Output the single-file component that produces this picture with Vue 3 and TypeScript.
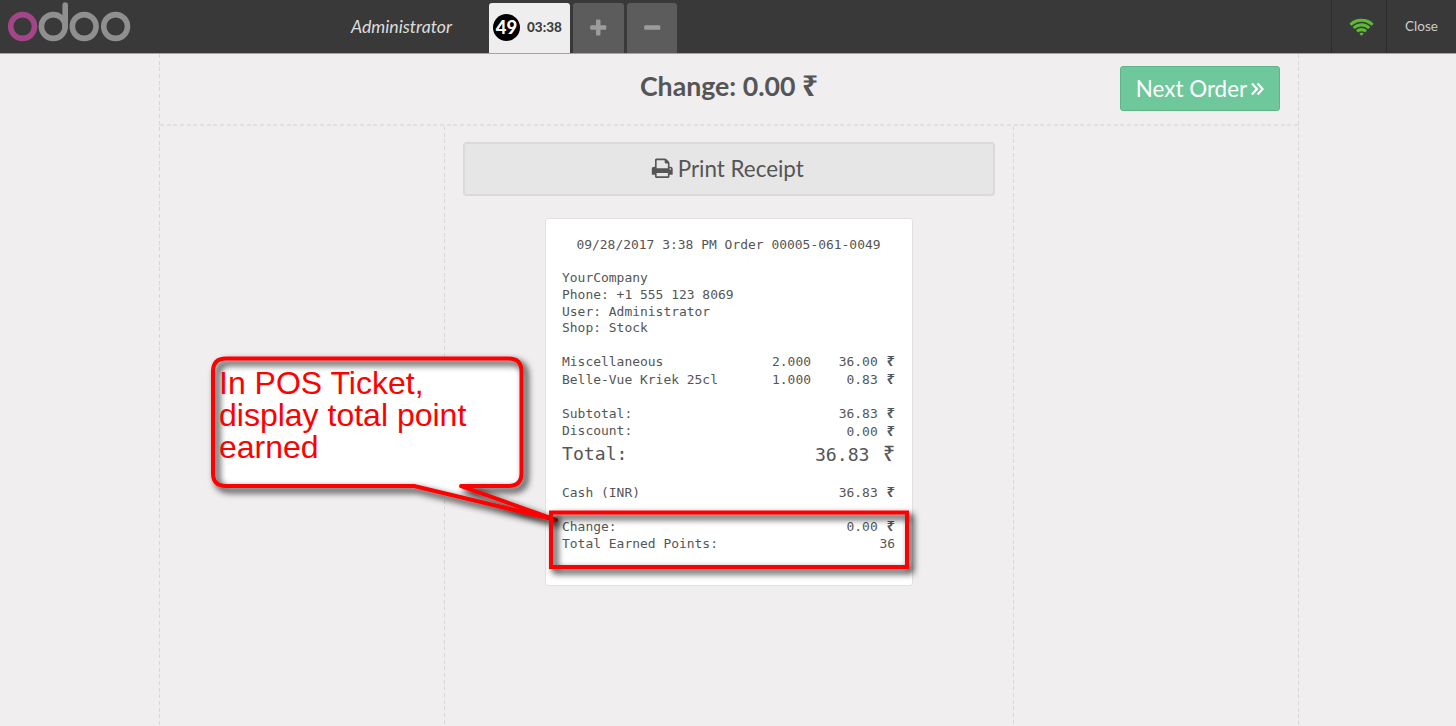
<script setup lang="ts">
interface Line {
  label: string
  qty?: string
  amount: string
  currency?: boolean
  kind?: string
}

const company: string[] = [
  'YourCompany',
  'Phone: +1 555 123 8069',
  'User: Administrator',
  'Shop: Stock',
]

const groups: { name: string; lines: Line[] }[] = [
  {
    name: 'items',
    lines: [
      { label: 'Miscellaneous', qty: '2.000', amount: '36.00', currency: true },
      { label: 'Belle-Vue Kriek 25cl', qty: '1.000', amount: '0.83', currency: true },
    ],
  },
  {
    name: 'totals',
    lines: [
      { label: 'Subtotal:', amount: '36.83', currency: true },
      { label: 'Discount:', amount: '0.00', currency: true },
      { label: 'Total:', amount: '36.83', currency: true, kind: 'big' },
    ],
  },
  { name: 'payments', lines: [{ label: 'Cash (INR)', amount: '36.83', currency: true }] },
  {
    name: 'summary',
    lines: [
      { label: 'Change:', amount: '0.00', currency: true },
      { label: 'Total Earned Points:', amount: '36' },
    ],
  },
]

const bubble =
  'M226 358.5H508.500Q521.500 358.500 521.500 371.500V473Q521.500 486 508.500 486H461L556 520L414 486H226Q213 486 213 473V371.500Q213 358.500 226 358.500Z'
</script>

<template>
  <div class="pos">
    <header class="topbar">
      <div class="brand">
        <svg class="logo" width="132" height="46" viewBox="0 0 132 46" fill="none" stroke-width="5.6">
          <circle cx="22.6" cy="26.500" r="11.900" stroke="#a24689" />
          <g stroke="#8f8f8f">
            <circle cx="53.300" cy="26.500" r="11.900" />
            <path d="M65.200 26.500V5" stroke-linecap="round" />
            <circle cx="84.200" cy="26.500" r="11.900" />
            <circle cx="115.600" cy="26.500" r="11.900" />
          </g>
        </svg>
        <span class="username">Administrator</span>
      </div>
      <nav class="orders">
        <div class="order selected">
          <span class="badge">49</span>
          <span class="time">03:38</span>
        </div>
        <div class="order square">
          <svg width="20.500" height="20.500" viewBox="0 0 1792 1792"><path d="M1600 736v192q0 40-28 68t-68 28h-416v416q0 40-28 68t-68 28h-192q-40 0-68-28t-28-68v-416h-416q-40 0-68-28t-28-68v-192q0-40 28-68t68-28h416v-416q0-40 28-68t68-28h192q40 0 68 28t28 68v416h416q40 0 68 28t28 68z" /></svg>
        </div>
        <div class="order square">
          <svg width="20.500" height="20.500" viewBox="0 0 1792 1792"><path d="M1600 736v192q0 40-28 68t-68 28h-1216q-40 0-68-28t-28-68v-192q0-40 28-68t68-28h1216q40 0 68 28t28 68z" /></svg>
        </div>
      </nav>
      <div class="status">
        <div class="cell wifi">
          <svg width="25" height="22" viewBox="0 0 2048 1792"><path d="M1024 1523q-20 0-93-73.500t-73-93.500q0-32 62.500-54t103.500-22 103.500 22 62.500 54q0 20-73 93.500t-93 73.500zm270-271q-2 0-40-25t-101.500-50-128.500-25-128.500 25-101 50-40.500 25q-18 0-93.500-75t-75.500-93q0-13 10-23 78-77 196-121t233-44 233 44 196 121q10 10 10 23 0 18-75.500 93t-93.500 75zm273-272q-11 0-23-8-136-105-252-154.500t-268-49.500q-85 0-170.500 22t-149 53-113.500 62-79 53-31 22q-17 0-92-75t-75-93q0-12 10-22 132-132 320-205t380-73 380 73 320 205q10 10 10 22 0 18-75 93t-92 75zm271-271q-11 0-22-9-179-157-371.500-236.500t-420.500-79.500-420.500 79.500-371.500 236.500q-11 9-22 9-17 0-92.500-75t-75.500-93q0-13 10-23 187-186 445-288t527-102 527 102 445 288q10 10 10 23 0 18-75.500 93t-92.500 75z" /></svg>
        </div>
        <div class="cell close">Close</div>
      </div>
    </header>

    <main class="screen">
      <div class="heading">
        <h1>Change: 0.00 <span class="rupee">₹</span></h1>
        <button class="next">
          <span>Next Order</span>
          <svg width="13" height="14" viewBox="0 0 13 14" fill="none" stroke="#fff" stroke-width="2.200"><path d="M1 1.500L6 7L1 12.500M6.600 1.500L11.600 7L6.600 12.500" /></svg>
        </button>
      </div>
      <div class="columns">
        <aside class="side"></aside>
        <section class="center">
          <button class="print">
            <svg width="22.500" height="22.500" viewBox="0 0 1792 1792"><path d="M448 1536h896v-256h-896v256zm0-640h896v-384h-160q-40 0-68-28t-28-68v-160h-640v640zm1152 64q0-26-19-45t-45-19-45 19-19 45 19 45 45 19 45-19 19-45zm128 0v416q0 13-9.500 22.500t-22.500 9.500h-224v160q0 40-28 68t-68 28h-960q-40 0-68-28t-28-68v-160h-224q-13 0-22.500-9.500t-9.500-22.500v-416q0-79 56.500-135.500t135.500-56.500h64v-544q0-40 28-68t68-28h672q40 0 88 20t76 48l152 152q28 28 48 76t20 88v256h64q79 0 135.500 56.500t56.500 135.500z" /></svg>
            <span>Print Receipt</span>
          </button>
          <article class="ticket">
            <div class="stamp">09/28/2017 3:38 PM Order 00005-061-0049</div>
            <div class="company">
              <div v-for="text in company" :key="text">{{ text }}</div>
            </div>
            <div v-for="group in groups" :key="group.name" :class="['group', group.name]">
              <div v-for="line in group.lines" :key="line.label" :class="['line', line.kind]">
                <span class="label">{{ line.label }}</span>
                <span v-if="line.qty" class="qty">{{ line.qty }}</span>
                <span :class="['amount', { money: line.currency }]">{{ line.amount }}<span v-if="line.currency" class="rupee">₹</span></span>
              </div>
            </div>
          </article>
        </section>
        <aside class="side last"></aside>
      </div>
    </main>

    <div class="annotation">
      <svg width="1456" height="726" viewBox="0 0 1456 726">
        <defs>
          <filter id="shade" x="-10%" y="-30%" width="120%" height="160%">
            <feDropShadow dx="4" dy="4" stdDeviation="3.500" flood-color="#000" flood-opacity="1" />
          </filter>
        </defs>
        <path :d="bubble" fill="#fff" />
        <path :d="bubble" fill="none" stroke="#f00" stroke-width="4" stroke-linejoin="round" filter="url(#shade)" />
        <rect x="551" y="512.500" width="356" height="54.500" fill="none" stroke="#f00" stroke-width="4" filter="url(#shade)" />
      </svg>
      <p class="note">In POS Ticket,<br />display total point<br />earned</p>
    </div>
  </div>
</template>

<style>
body {
  margin: 0;
  overflow: hidden;
}
</style>

<style scoped>
.pos {
  --dash-down: repeating-linear-gradient(to bottom, #d9d8d8 0 4px, transparent 4px 6.670px);
  --dash-across: repeating-linear-gradient(to right, #e1e0e0 0 4px, transparent 4px 6.670px);
  position: relative;
  display: flex;
  flex-direction: column;
  width: 1456px;
  height: 726px;
  overflow: hidden;
  background: #f0eeee;
  color: #555;
  font-family: Lato, 'Noto Sans', sans-serif;
}
.pos * {
  box-sizing: border-box;
}
.topbar {
  display: flex;
  height: 54px;
  flex: none;
  background: #393939;
  border-bottom: 1px solid #a5a4a4;
}
.brand {
  display: flex;
  justify-content: space-between;
  width: 489px;
  padding-right: 37px;
}
.username {
  color: #ddd;
  font-size: 17.700px;
  font-style: italic;
  line-height: 54px;
}
.orders {
  display: flex;
  flex: 1;
  gap: 3px;
  padding-top: 3px;
}
.order {
  display: flex;
  align-items: center;
  height: 50px;
  border-radius: 3px 3px 0 0;
  background: #5c5c5c;
}
.order svg {
  fill: #9c9c9c;
}
.square {
  width: 50.500px;
  justify-content: center;
}
.selected {
  width: 81px;
  padding-left: 4px;
  gap: 7px;
  background: #eee;
  color: #3e3e3e;
}
.badge {
  width: 27px;
  height: 27px;
  margin-top: -1px;
  border-radius: 50%;
  background: #000;
  color: #fff;
  font-size: 18.500px;
  font-weight: 900;
  line-height: 26px;
  text-align: center;
}
.time {
  margin-top: -2px;
  font-size: 13.500px;
  font-weight: 900;
}
.status {
  display: flex;
}
.cell {
  display: flex;
  align-items: center;
  justify-content: center;
  border-left: 1px solid #2c2c2c;
}
.wifi {
  width: 55px;
  padding-left: 4px;
}
.wifi svg {
  margin-top: 2px;
  fill: #5dba35;
}
.close {
  width: 70px;
  padding-bottom: 1px;
  color: #ccc;
  font-size: 13.500px;
}
.screen {
  display: flex;
  flex: 1;
  flex-direction: column;
  width: 1140px;
  margin-left: 159px;
  padding: 0 1px;
  background:
    var(--dash-down) left / 1px 100% no-repeat,
    var(--dash-down) right / 1px 100% no-repeat;
}
.heading {
  display: grid;
  grid-template-columns: 1fr auto 1fr;
  align-items: start;
  height: 72px;
  padding-right: 18px;
  background: var(--dash-across) bottom / 100% 2px no-repeat;
}
h1 {
  grid-column: 2;
  margin: 14px 0 0 18px;
  font-size: 26.700px;
  font-weight: 700;
  line-height: 36px;
}
.rupee {
  font-family: 'Noto Sans', 'DejaVu Sans', sans-serif;
}
h1 .rupee {
  font-size: 28px;
  line-height: 1;
}
.next {
  display: flex;
  align-items: center;
  justify-content: center;
  gap: 4px;
  justify-self: end;
  width: 160px;
  height: 45px;
  margin-top: 12px;
  padding: 0;
  border: 1px solid #5db588;
  border-radius: 3px;
  background: #6ec89b;
  color: #fff;
  font: 22.400px Lato, sans-serif;
}
.columns {
  display: flex;
  flex: 1;
}
.side {
  width: 285px;
  background: var(--dash-down) right / 1px 100% no-repeat;
}
.side.last {
  flex: 1;
  background: none;
}
.center {
  width: 569px;
  padding: 16px 18px;
  background: var(--dash-down) right / 1px 100% no-repeat;
}
.print {
  display: flex;
  align-items: center;
  justify-content: center;
  gap: 4px;
  width: 532px;
  height: 54px;
  padding: 0 3px 2px 0;
  border: 2px solid #dadada;
  border-radius: 4px;
  background: #e6e6e6;
  color: #555;
  font: 22.400px Lato, sans-serif;
}
.print svg {
  margin-top: 1px;
  fill: #555;
}
.ticket {
  width: 368px;
  height: 368px;
  margin: 22px auto 0 82px;
  padding: 17.500px 17px 0 16px;
  border: 1px solid #e2e1e1;
  border-radius: 3px;
  background: #fff;
  color: #555;
  font: 12.960px/16.670px 'DejaVu Sans Mono', monospace;
  white-space: nowrap;
}
.stamp {
  text-align: center;
}
.company {
  padding-top: 17px;
}
.group {
  padding-top: 16.500px;
}
.group.items {
  padding-top: 16px;
}
.line {
  display: flex;
  height: 17.700px;
  line-height: 17.700px;
}
.label {
  flex: 1;
}
.qty {
  width: 39px;
}
.amount {
  width: 84px;
  text-align: right;
}
.money {
  padding-top: 0.500px;
}
.money .rupee {
  display: inline-block;
  width: 10px;
  margin-left: 7.300px;
  font-size: 15px;
  font-weight: 600;
  line-height: 1;
}
.big {
  height: 27px;
  font-size: 18.150px;
  line-height: 27px;
}
.big .money {
  width: 120px;
}
.big .rupee {
  width: 14px;
  margin-left: 11.500px;
  font-size: 21px;
  font-weight: 500;
}
.annotation {
  position: absolute;
  inset: 0;
  pointer-events: none;
}
.note {
  position: absolute;
  left: 219px;
  top: 367px;
  margin: 0;
  color: #f00;
  font: 32px/32px 'Liberation Sans', Arial, sans-serif;
}
</style>
